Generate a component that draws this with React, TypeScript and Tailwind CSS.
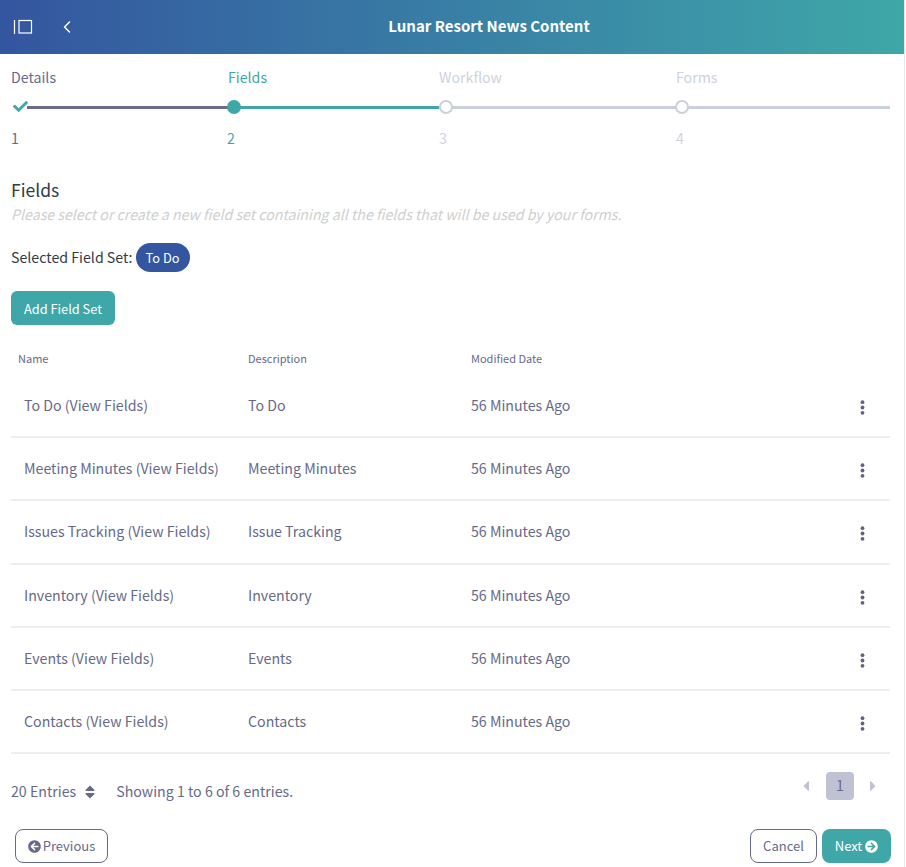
import React from 'react';
import { ChevronLeft } from 'lucide-react';
import { FaArrowCircleLeft, FaArrowCircleRight, FaCaretLeft, FaCaretRight, FaCheck, FaSort } from 'react-icons/fa';

const rows = [
  { name: 'To Do (View Fields)', description: 'To Do' },
  { name: 'Meeting Minutes (View Fields)', description: 'Meeting Minutes' },
  { name: 'Issues Tracking (View Fields)', description: 'Issue Tracking' },
  { name: 'Inventory (View Fields)', description: 'Inventory' },
  { name: 'Events (View Fields)', description: 'Events' },
  { name: 'Contacts (View Fields)', description: 'Contacts' },
];

const SidebarIcon = () => (
  <svg width="20" height="16" viewBox="0 0 20 16" fill="none" stroke="white">
    <path d="M1.5 1v14" strokeWidth="1.2" />
    <rect x="6" y="1.5" width="12.5" height="12.5" strokeWidth="1.2" />
  </svg>
);

const Dots = () => (
  <svg width="5" height="15" viewBox="0 0 5 15" fill="#5f6285">
    <circle cx="2.5" cy="2.2" r="1.9" />
    <circle cx="2.5" cy="7.5" r="1.9" />
    <circle cx="2.5" cy="12.8" r="1.9" />
  </svg>
);

export default function App() {
  return (
    <div className="w-[906px] h-[867px] overflow-hidden bg-white font-['Noto_Sans_CJK_SC','Liberation_Sans',sans-serif] text-[14.2px] text-[#666a8a]">
      <div className="w-[905px] h-full border-r border-[#e8e8e8]">
        <header className="h-[54px] w-full flex items-center relative bg-gradient-to-r from-[#34559f] to-[#3fa7a8] text-white">
          <div className="ml-[13px] flex items-center -mt-[1px]">
            <SidebarIcon />
          </div>
          <ChevronLeft className="ml-[25px] -mt-[1px] -translate-x-[1px]" size={20} strokeWidth={1.8} />
          <h1 className="absolute inset-x-0 text-center text-[15px] font-bold leading-none pl-[74px] -mt-[3px]">Lunar Resort News Content</h1>
        </header>

        <div className="pl-[11px] pr-[14px]">
          <div className="flex pt-[13px]">
            <div className="w-[217px]">
              <div className="leading-5 h-5">Details</div>
              <div className="relative h-[20px] mt-[10px] flex items-center">
                <div className="ml-[16px] flex-1 h-[3px] bg-[#6a6c8f]" />
                <FaCheck className="absolute left-[2px] top-[2px] text-[#3fa7a8]" size={15} />
              </div>
              <div className="leading-5 mt-[11px]">1</div>
            </div>
            <div className="w-[211px] text-[#3fa7a8]">
              <div className="leading-5 h-5">Fields</div>
              <div className="relative h-[20px] mt-[10px] flex items-center">
                <div className="flex-1 h-[3px] bg-[#3fa7a8]" />
                <div className="absolute -left-[1px] w-[14px] h-[14px] rounded-full bg-[#3fa7a8]" />
              </div>
              <div className="leading-5 mt-[11px] -ml-[1px]">2</div>
            </div>
            <div className="w-[237px] text-[#cdd3de]">
              <div className="leading-5 h-5">Workflow</div>
              <div className="relative h-[20px] mt-[10px] flex items-center">
                <div className="flex-1 h-[3px] bg-[#c9d1dc]" />
                <div className="absolute left-0 w-[14px] h-[14px] rounded-full bg-white border-2 border-[#c9d1dc]" />
              </div>
              <div className="leading-5 mt-[11px]">3</div>
            </div>
            <div className="w-[214px] text-[#cdd3de]">
              <div className="leading-5 h-5">Forms</div>
              <div className="relative h-[20px] mt-[10px] flex items-center">
                <div className="flex-1 h-[3px] bg-[#c9d1dc]" />
                <div className="absolute -left-[1px] w-[14px] h-[14px] rounded-full bg-white border-2 border-[#c9d1dc]" />
              </div>
              <div className="leading-5 mt-[11px]">4</div>
            </div>
          </div>

          <h2 className="mt-[30px] text-[17.5px] leading-6 text-[#2f3b47]">Fields</h2>
          <p className="mt-[2px] italic leading-5 text-[#cfcfcf]">Please select or create a new field set containing all the fields that will be used by your forms.</p>

          <div className="mt-[18px] flex items-center h-[30px]">
            <span className="text-[#2f3b47] leading-5">Selected Field Set:</span>
            <span className="ml-[3px] mt-[1px] pt-[2px] h-[29px] w-[54px] flex items-center justify-center rounded-full bg-[#34559f] text-white text-[12.8px] leading-none">To Do</span>
          </div>

          <button className="mt-[19px] block w-[104px] h-[34px] pt-[3px] rounded-md bg-[#3fa7a8] text-white text-[12.8px] leading-none">Add Field Set</button>

          <div className="mt-[25px] grid grid-cols-[237px_223px_1fr] text-[11px] leading-4 h-[25px]">
            <div className="pl-[7px]">Name</div>
            <div>Description</div>
            <div>Modified Date</div>
          </div>

          <div>
            {rows.map((row) => (
              <div key={row.name} className="grid grid-cols-[237px_223px_1fr_auto] items-center h-[63.2px] border-b-2 border-[#eeeeee]">
                <div className="pl-[13px]">{row.name}</div>
                <div>{row.description}</div>
                <div>56 Minutes Ago</div>
                <div className="pr-[25px] flex items-center pt-[4px]"><Dots /></div>
              </div>
            ))}
          </div>

          <div className="mt-[18px] flex items-start justify-between h-[40px]">
            <div className="flex items-center h-5 mt-[10px]">
              <span>20 Entries</span>
              <FaSort className="ml-[6px] text-[#666a8a]" size={16} />
              <span className="ml-[18px]">Showing 1 to 6 of 6 entries.</span>
            </div>
            <div className="flex items-center h-[28px] mr-[9px]">
              <FaCaretLeft className="text-[#bfc2d2]" size={16} />
              <span className="ml-[12px] w-[28px] h-[28px] rounded bg-[#bfc2d2] flex items-center justify-center">1</span>
              <FaCaretRight className="ml-[11px] text-[#bfc2d2]" size={16} />
            </div>
          </div>

          <div className="mt-[17px] flex items-center justify-between">
            <button className="ml-[4px] w-[93px] h-[34px] rounded-lg border border-[#666a8a] bg-white text-[13px] flex items-center justify-center gap-[2px]">
              <FaArrowCircleLeft size={13} />
              <span>Previous</span>
            </button>
            <div className="flex items-center gap-[5px] mr-[-1px]">
              <button className="w-[67px] h-[34px] rounded-lg border border-[#666a8a] bg-white text-[13px]">Cancel</button>
              <button className="w-[69px] h-[34px] rounded-lg bg-[#3fa7a8] text-white text-[13px] flex items-center justify-center gap-[3px]">
                <span>Next</span>
                <FaArrowCircleRight size={13} />
              </button>
            </div>
          </div>
        </div>
      </div>
    </div>
  );
}
